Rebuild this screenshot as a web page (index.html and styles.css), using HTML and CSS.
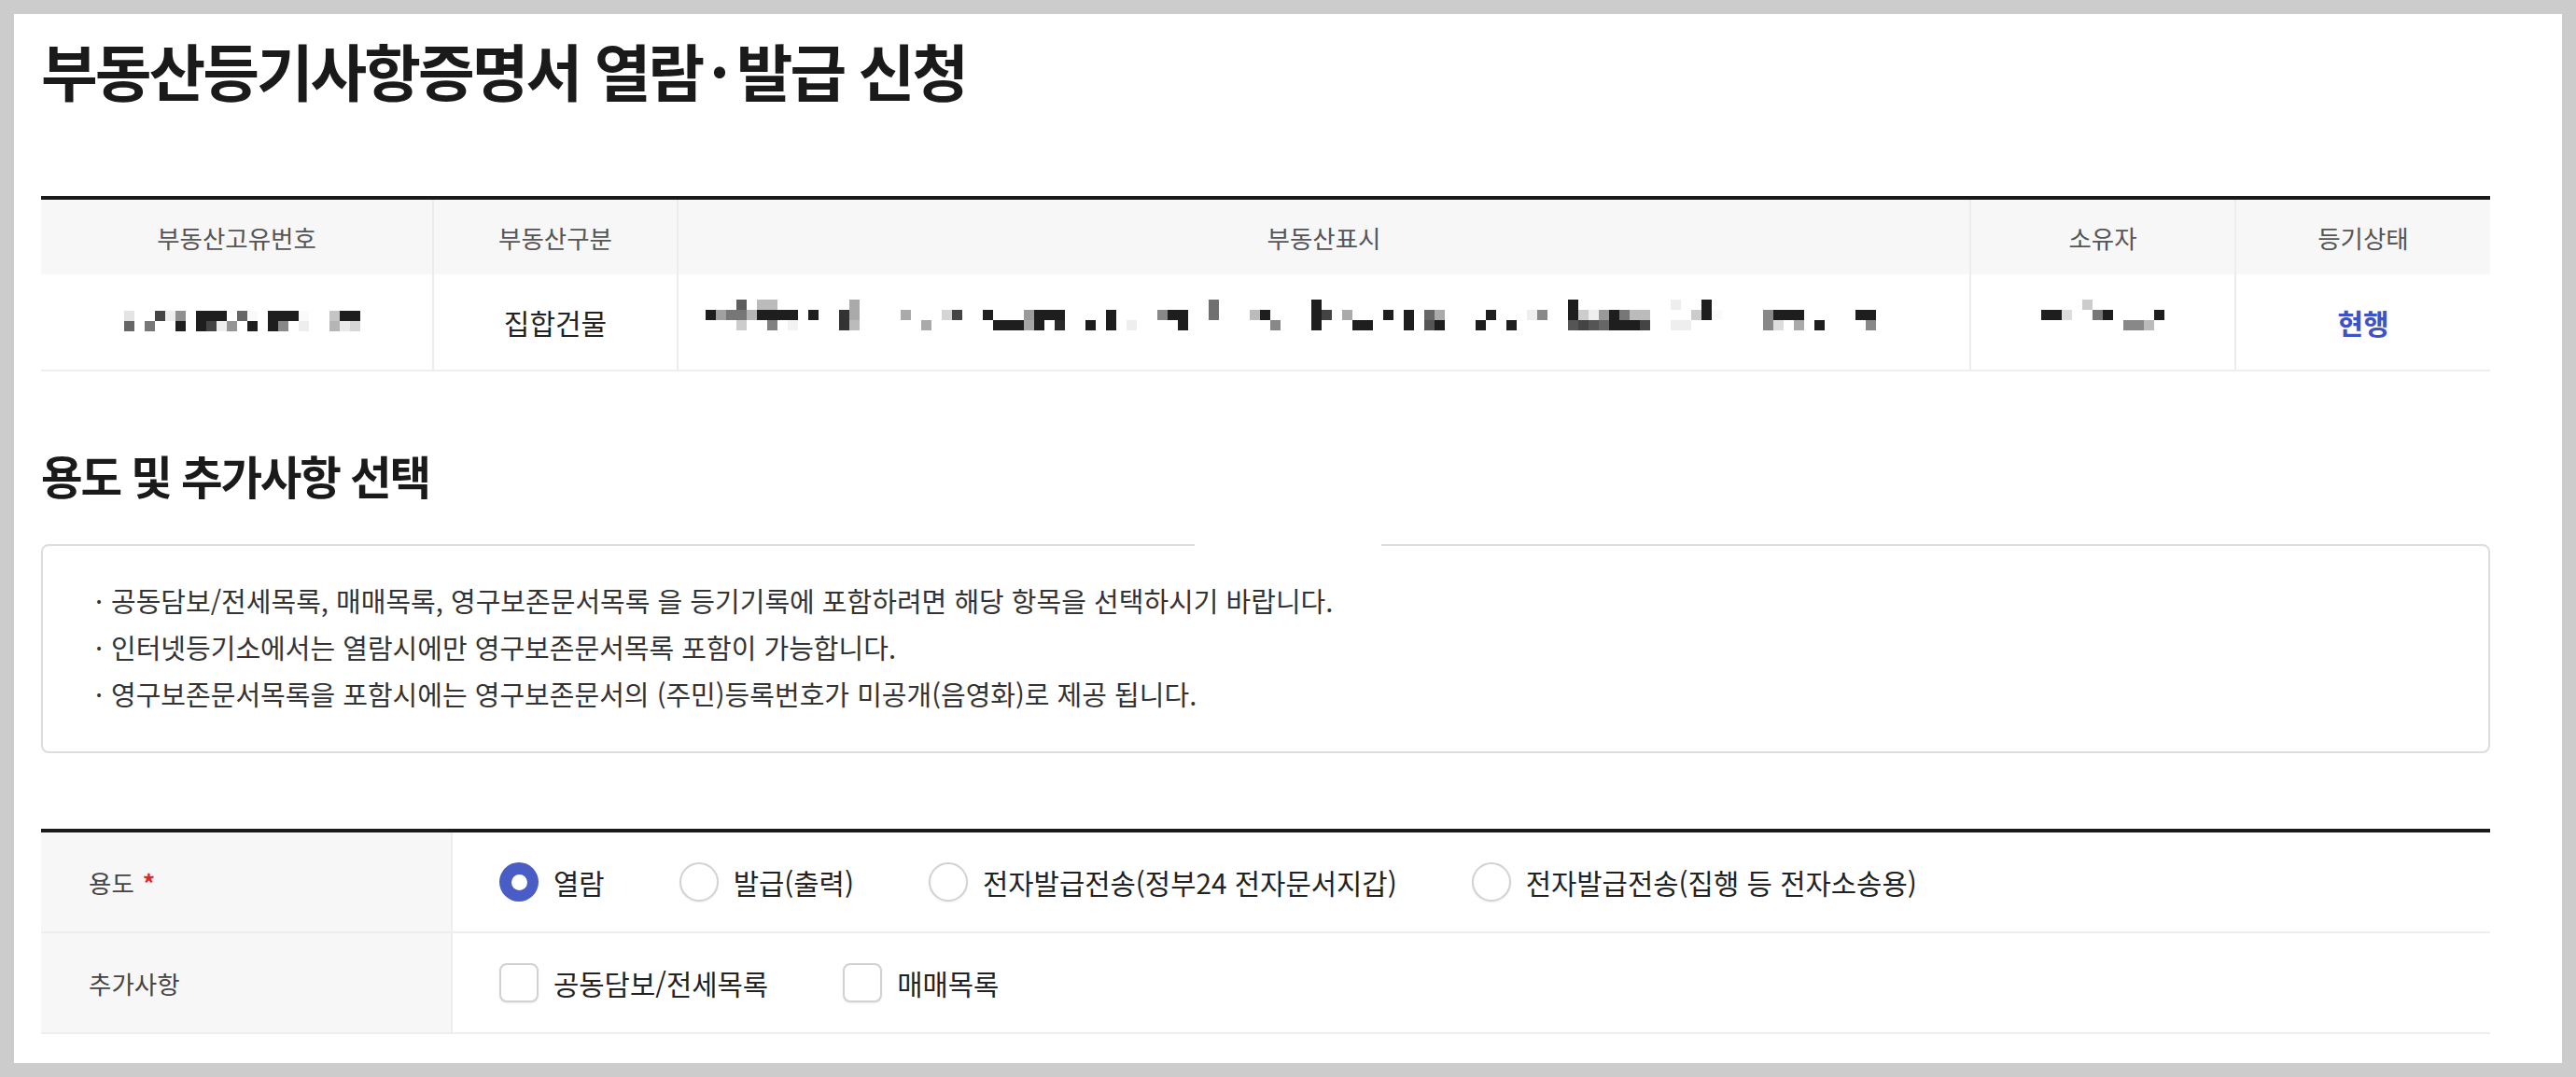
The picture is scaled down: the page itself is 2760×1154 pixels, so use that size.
FILE: index.html
```html
<!DOCTYPE html>
<html lang="ko">
<head>
<meta charset="utf-8">
<title>부동산등기사항증명서 열람·발급 신청</title>
<link rel="stylesheet" href="styles.css">
</head>
<body>
<div class="page">
  <h1 class="title">부동산등기사항증명서 열람<span class="mid">·</span>발급 신청</h1>

  <div class="info-table">
    <div class="th">부동산고유번호</div>
    <div class="th">부동산구분</div>
    <div class="th">부동산표시</div>
    <div class="th">소유자</div>
    <div class="th">등기상태</div>

    <div class="td td-id">
      <svg class="mosaic" width="253" height="22" viewBox="0 0 253 22">
        <rect x="0" y="0" width="11" height="11" fill="#e4e4e4"/>
        <rect x="33" y="0" width="11" height="11" fill="#444"/>
        <rect x="44" y="0" width="11" height="11" fill="#eee"/>
        <rect x="55" y="0" width="11" height="11" fill="#909090"/>
        <rect x="77" y="0" width="33" height="11" fill="#1e1e1e"/>
        <rect x="121" y="0" width="11" height="11" fill="#666"/>
        <rect x="132" y="0" width="11" height="11" fill="#fafafa"/>
        <rect x="154" y="0" width="33" height="11" fill="#1e1e1e"/>
        <rect x="187" y="0" width="11" height="11" fill="#fafafa"/>
        <rect x="220" y="0" width="11" height="11" fill="#c5c5c5"/>
        <rect x="231" y="0" width="22" height="11" fill="#1e1e1e"/>
        <rect x="0" y="11" width="11" height="11" fill="#666"/>
        <rect x="22" y="11" width="11" height="11" fill="#777"/>
        <rect x="55" y="11" width="11" height="11" fill="#1e1e1e"/>
        <rect x="77" y="11" width="11" height="11" fill="#1e1e1e"/>
        <rect x="88" y="11" width="11" height="11" fill="#444"/>
        <rect x="99" y="11" width="11" height="11" fill="#eee"/>
        <rect x="110" y="11" width="11" height="11" fill="#959595"/>
        <rect x="132" y="11" width="11" height="11" fill="#1e1e1e"/>
        <rect x="154" y="11" width="11" height="11" fill="#1e1e1e"/>
        <rect x="165" y="11" width="11" height="11" fill="#888"/>
        <rect x="187" y="11" width="11" height="11" fill="#eee"/>
        <rect x="220" y="11" width="11" height="11" fill="#b5b5b5"/>
        <rect x="231" y="11" width="11" height="11" fill="#eaeaea"/>
        <rect x="242" y="11" width="11" height="11" fill="#d5d5d5"/>
      </svg>
    </div>
    <div class="td">집합건물</div>
    <div class="td td-addr">
      <svg class="mosaic mosaic-3" width="1265" height="33" viewBox="0 0 1265 33">
        <rect x="33" y="0" width="11" height="11" fill="#5e5e5e"/>
        <rect x="55" y="0" width="22" height="11" fill="#bbb"/>
        <rect x="154" y="0" width="11" height="11" fill="#aaa"/>
        <rect x="539" y="0" width="11" height="11" fill="#707070"/>
        <rect x="649" y="0" width="11" height="11" fill="#1e1e1e"/>
        <rect x="924" y="0" width="11" height="11" fill="#1e1e1e"/>
        <rect x="1034" y="0" width="11" height="11" fill="#eee"/>
        <rect x="1067" y="0" width="11" height="11" fill="#1e1e1e"/>

        <rect x="0" y="11" width="11" height="11" fill="#1e1e1e"/>
        <rect x="11" y="11" width="11" height="11" fill="#a0a0a0"/>
        <rect x="22" y="11" width="22" height="11" fill="#777"/>
        <rect x="44" y="11" width="11" height="11" fill="#b5b5b5"/>
        <rect x="55" y="11" width="44" height="11" fill="#1e1e1e"/>
        <rect x="110" y="11" width="11" height="11" fill="#1e1e1e"/>
        <rect x="143" y="11" width="11" height="11" fill="#333"/>
        <rect x="154" y="11" width="11" height="11" fill="#aaa"/>
        <rect x="209" y="11" width="11" height="11" fill="#aaa"/>
        <rect x="253" y="11" width="11" height="11" fill="#d5d5d5"/>
        <rect x="264" y="11" width="11" height="11" fill="#444"/>
        <rect x="297" y="11" width="11" height="11" fill="#1e1e1e"/>
        <rect x="341" y="11" width="11" height="11" fill="#9a9a9a"/>
        <rect x="352" y="11" width="33" height="11" fill="#1e1e1e"/>
        <rect x="429" y="11" width="11" height="11" fill="#1e1e1e"/>
        <rect x="484" y="11" width="11" height="11" fill="#888"/>
        <rect x="495" y="11" width="22" height="11" fill="#1e1e1e"/>
        <rect x="539" y="11" width="11" height="11" fill="#707070"/>
        <rect x="583" y="11" width="11" height="11" fill="#bbb"/>
        <rect x="594" y="11" width="11" height="11" fill="#1e1e1e"/>
        <rect x="649" y="11" width="11" height="11" fill="#1e1e1e"/>
        <rect x="660" y="11" width="11" height="11" fill="#444"/>
        <rect x="682" y="11" width="11" height="11" fill="#aaa"/>
        <rect x="726" y="11" width="11" height="11" fill="#1e1e1e"/>
        <rect x="748" y="11" width="11" height="11" fill="#1e1e1e"/>
        <rect x="770" y="11" width="11" height="11" fill="#666"/>
        <rect x="781" y="11" width="11" height="11" fill="#aaa"/>
        <rect x="836" y="11" width="11" height="11" fill="#1e1e1e"/>
        <rect x="880" y="11" width="11" height="11" fill="#eee"/>
        <rect x="891" y="11" width="11" height="11" fill="#888"/>
        <rect x="924" y="11" width="11" height="11" fill="#1e1e1e"/>
        <rect x="935" y="11" width="11" height="11" fill="#ccc"/>
        <rect x="946" y="11" width="11" height="11" fill="#eee"/>
        <rect x="957" y="11" width="11" height="11" fill="#999"/>
        <rect x="968" y="11" width="11" height="11" fill="#1e1e1e"/>
        <rect x="979" y="11" width="11" height="11" fill="#777"/>
        <rect x="990" y="11" width="22" height="11" fill="#bbb"/>
        <rect x="1056" y="11" width="11" height="11" fill="#ccc"/>
        <rect x="1067" y="11" width="11" height="11" fill="#1e1e1e"/>
        <rect x="1078" y="11" width="11" height="11" fill="#fafafa"/>
        <rect x="1133" y="11" width="11" height="11" fill="#888"/>
        <rect x="1144" y="11" width="33" height="11" fill="#1e1e1e"/>
        <rect x="1232" y="11" width="22" height="11" fill="#1e1e1e"/>

        <rect x="33" y="22" width="11" height="11" fill="#ccc"/>
        <rect x="66" y="22" width="11" height="11" fill="#808080"/>
        <rect x="88" y="22" width="11" height="11" fill="#f2f2f2"/>
        <rect x="143" y="22" width="11" height="11" fill="#333"/>
        <rect x="154" y="22" width="11" height="11" fill="#bbb"/>
        <rect x="231" y="22" width="11" height="11" fill="#aaa"/>
        <rect x="308" y="22" width="33" height="11" fill="#1e1e1e"/>
        <rect x="341" y="22" width="11" height="11" fill="#a5a5a5"/>
        <rect x="352" y="22" width="11" height="11" fill="#1e1e1e"/>
        <rect x="374" y="22" width="11" height="11" fill="#2a2a2a"/>
        <rect x="407" y="22" width="11" height="11" fill="#1e1e1e"/>
        <rect x="429" y="22" width="11" height="11" fill="#1e1e1e"/>
        <rect x="451" y="22" width="11" height="11" fill="#eee"/>
        <rect x="506" y="22" width="11" height="11" fill="#1e1e1e"/>
        <rect x="605" y="22" width="11" height="11" fill="#888"/>
        <rect x="649" y="22" width="11" height="11" fill="#1e1e1e"/>
        <rect x="693" y="22" width="22" height="11" fill="#1e1e1e"/>
        <rect x="748" y="22" width="11" height="11" fill="#1e1e1e"/>
        <rect x="770" y="22" width="11" height="11" fill="#555"/>
        <rect x="781" y="22" width="11" height="11" fill="#1e1e1e"/>
        <rect x="825" y="22" width="11" height="11" fill="#1e1e1e"/>
        <rect x="858" y="22" width="11" height="11" fill="#1e1e1e"/>
        <rect x="924" y="22" width="11" height="11" fill="#555"/>
        <rect x="935" y="22" width="11" height="11" fill="#444"/>
        <rect x="946" y="22" width="11" height="11" fill="#555"/>
        <rect x="957" y="22" width="11" height="11" fill="#666"/>
        <rect x="968" y="22" width="33" height="11" fill="#1e1e1e"/>
        <rect x="1001" y="22" width="11" height="11" fill="#444"/>
        <rect x="1034" y="22" width="22" height="11" fill="#eee"/>
        <rect x="1133" y="22" width="11" height="11" fill="#888"/>
        <rect x="1144" y="22" width="11" height="11" fill="#ddd"/>
        <rect x="1166" y="22" width="11" height="11" fill="#aaa"/>
        <rect x="1188" y="22" width="11" height="11" fill="#1e1e1e"/>
        <rect x="1243" y="22" width="11" height="11" fill="#888"/>
      </svg>
    </div>
    <div class="td">
      <svg class="mosaic mosaic-3" width="132" height="33" viewBox="0 0 132 33">
        <rect x="44" y="0" width="11" height="11" fill="#ccc"/>
        <rect x="0" y="11" width="22" height="11" fill="#1e1e1e"/>
        <rect x="22" y="11" width="11" height="11" fill="#ddd"/>
        <rect x="55" y="11" width="11" height="11" fill="#777"/>
        <rect x="66" y="11" width="11" height="11" fill="#1e1e1e"/>
        <rect x="121" y="11" width="11" height="11" fill="#1e1e1e"/>
        <rect x="88" y="22" width="22" height="11" fill="#888"/>
        <rect x="110" y="22" width="11" height="11" fill="#bbb"/>
      </svg>
    </div>
    <div class="td td-state">현행</div>
  </div>

  <h2 class="sec-title">용도 및 추가사항 선택</h2>

  <div class="notice">
    <span class="notice-gap"></span>
    <ul class="notice-list">
      <li>공동담보/전세목록, 매매목록, 영구보존문서목록 을 등기기록에 포함하려면 해당 항목을 선택하시기 바랍니다.</li>
      <li>인터넷등기소에서는 열람시에만 영구보존문서목록 포함이 가능합니다.</li>
      <li>영구보존문서목록을 포함시에는 영구보존문서의 (주민)등록번호가 미공개(음영화)로 제공 됩니다.</li>
    </ul>
  </div>

  <div class="form-table">
    <div class="form-row">
      <div class="form-label">용도<span class="req">*</span></div>
      <div class="form-field">
        <label class="opt"><span class="radio on"></span><span class="opt-text">열람</span></label>
        <label class="opt"><span class="radio"></span><span class="opt-text">발급(출력)</span></label>
        <label class="opt"><span class="radio"></span><span class="opt-text">전자발급전송(정부24 전자문서지갑)</span></label>
        <label class="opt"><span class="radio"></span><span class="opt-text">전자발급전송(집행 등 전자소송용)</span></label>
      </div>
    </div>
    <div class="form-row">
      <div class="form-label">추가사항</div>
      <div class="form-field">
        <label class="opt"><span class="check"></span><span class="opt-text">공동담보/전세목록</span></label>
        <label class="opt"><span class="check"></span><span class="opt-text">매매목록</span></label>
      </div>
    </div>
  </div>
</div>
</body>
</html>
```

FILE: styles.css
```css
* {
  box-sizing: border-box;
}

html, body {
  margin: 0;
  padding: 0;
}

body {
  background: #cccccc;
  font-family: "Noto Sans CJK KR", "Noto Sans", sans-serif;
  color: #222;
}

.page {
  margin: 15px;
  height: 1124px;
  background: #ffffff;
  padding: 0 77px 0 29px;
  overflow: hidden;
}

.title {
  margin: 26px 0 0 0;
  font-size: 66px;
  line-height: 66px;
  font-weight: 700;
  letter-spacing: -3px;
  color: #1a1a1a;
}

.title .mid {
  margin: 0 10px 0 8px;
}

/* info table */
.info-table {
  margin-top: 103px;
  display: grid;
  grid-template-columns: 419px 260px 1383px 282px 272px;
  grid-template-rows: 80px 102px;
  column-gap: 2px;
  background: #ececec;
  border-top: 4px solid #1a1a1a;
  border-bottom: 2px solid #eeeeee;
}

.th {
  background: #f7f7f7;
  display: flex;
  align-items: center;
  justify-content: center;
  font-size: 26.5px;
  color: #555;
}

.td {
  background: #ffffff;
  display: flex;
  align-items: center;
  justify-content: center;
  font-size: 30px;
  color: #222;
}

.td-id {
  padding-left: 12px;
}

.td-addr {
  justify-content: flex-start;
  padding-left: 29px;
}

.td-state {
  color: #3d52c4;
  font-weight: 700;
}

.mosaic {
  display: block;
  margin-bottom: 2px;
}

.mosaic-3 {
  margin-bottom: 15px;
}

/* section */
.sec-title {
  margin: 87px 0 0 0;
  font-size: 48.5px;
  line-height: 49px;
  font-weight: 700;
  letter-spacing: -2.2px;
  color: #1a1a1a;
}

.notice {
  position: relative;
  margin-top: 49px;
  border: 2px solid #dddddd;
  border-radius: 8px;
  padding: 33px 0 37px 56px;
}

.notice-gap {
  position: absolute;
  top: -2px;
  left: 1234px;
  width: 200px;
  height: 2px;
  background: #ffffff;
}

.notice-list {
  list-style: none;
  margin: 0;
  padding: 0;
}

.notice-list li {
  font-size: 29px;
  line-height: 50px;
  color: #333;
}

.notice-list li::before {
  content: "·";
  display: inline-block;
  width: 17px;
}

/* form table */
.form-table {
  margin-top: 81px;
  border-top: 4px solid #1a1a1a;
}

.form-row {
  display: grid;
  grid-template-columns: 439px 1fr;
  column-gap: 2px;
  height: 108px;
  background: #eeeeee;
  border-bottom: 2px solid #eeeeee;
}

.form-label {
  background: #f7f7f7;
  display: flex;
  align-items: center;
  padding-left: 51px;
  font-size: 26.5px;
  color: #444;
}

.req {
  color: #e02828;
  font-weight: 700;
  margin-left: 9px;
}

.form-field {
  background: #ffffff;
  display: flex;
  align-items: center;
  gap: 80px;
  padding-left: 50px;
}

.opt {
  display: flex;
  align-items: center;
  gap: 16px;
}

.opt-text {
  font-size: 29.7px;
  color: #222;
}

.radio {
  width: 42px;
  height: 42px;
  border-radius: 50%;
  border: 2px solid #d2d2d2;
  background: #fff;
  box-shadow: 0 1px 2px rgba(0, 0, 0, 0.08);
  display: flex;
  align-items: center;
  justify-content: center;
}

.radio.on {
  border: none;
  background: #4a5dc6;
  box-shadow: none;
}

.radio.on::after {
  content: "";
  width: 17px;
  height: 17px;
  border-radius: 50%;
  background: #ffffff;
}

.check {
  width: 42px;
  height: 42px;
  border-radius: 8px;
  border: 2px solid #d2d2d2;
  background: #fff;
  box-shadow: 0 1px 2px rgba(0, 0, 0, 0.08);
}
```
